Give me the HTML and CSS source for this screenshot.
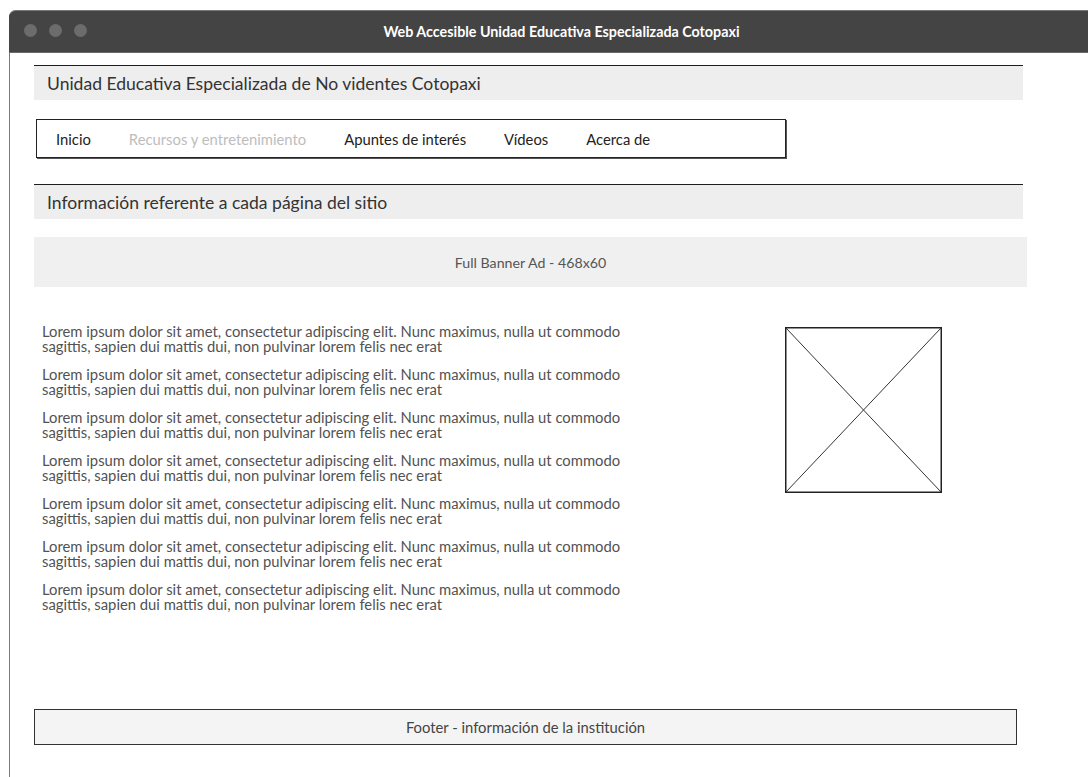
FILE: index.html
```html
<!DOCTYPE html>
<html lang="es">
<head>
<meta charset="utf-8">
<title>Web Accesible Unidad Educativa Especializada Cotopaxi</title>
<link rel="stylesheet" href="styles.css">
</head>
<body>
<div class="window">
  <div class="titlebar">
    <div class="dots"><span class="dot"></span><span class="dot"></span><span class="dot"></span></div>
    <div class="title">Web Accesible Unidad Educativa Especializada Cotopaxi</div>
  </div>
  <div class="page">
    <h1 class="band">Unidad Educativa Especializada de No videntes Cotopaxi</h1>
    <nav class="menu">
      <a class="menu-item">Inicio</a>
      <a class="menu-item disabled">Recursos y entretenimiento</a>
      <a class="menu-item">Apuntes de interés</a>
      <a class="menu-item">Vídeos</a>
      <a class="menu-item">Acerca de</a>
    </nav>
    <h2 class="band">Información referente a cada página del sitio</h2>
    <div class="banner">Full Banner Ad - 468x60</div>
    <main class="content">
      <div class="text">
        <p>Lorem ipsum dolor sit amet, consectetur adipiscing elit. Nunc maximus, nulla ut commodo<br>sagittis, sapien dui mattis dui, non pulvinar lorem felis nec erat</p>
        <p>Lorem ipsum dolor sit amet, consectetur adipiscing elit. Nunc maximus, nulla ut commodo<br>sagittis, sapien dui mattis dui, non pulvinar lorem felis nec erat</p>
        <p>Lorem ipsum dolor sit amet, consectetur adipiscing elit. Nunc maximus, nulla ut commodo<br>sagittis, sapien dui mattis dui, non pulvinar lorem felis nec erat</p>
        <p>Lorem ipsum dolor sit amet, consectetur adipiscing elit. Nunc maximus, nulla ut commodo<br>sagittis, sapien dui mattis dui, non pulvinar lorem felis nec erat</p>
        <p>Lorem ipsum dolor sit amet, consectetur adipiscing elit. Nunc maximus, nulla ut commodo<br>sagittis, sapien dui mattis dui, non pulvinar lorem felis nec erat</p>
        <p>Lorem ipsum dolor sit amet, consectetur adipiscing elit. Nunc maximus, nulla ut commodo<br>sagittis, sapien dui mattis dui, non pulvinar lorem felis nec erat</p>
        <p>Lorem ipsum dolor sit amet, consectetur adipiscing elit. Nunc maximus, nulla ut commodo<br>sagittis, sapien dui mattis dui, non pulvinar lorem felis nec erat</p>
      </div>
      <svg class="placeholder" viewBox="0 0 157 166" preserveAspectRatio="none">
        <rect x="0.75" y="0.75" width="155.5" height="164.5" fill="#fff" stroke="#222" stroke-width="1.5"/>
        <line x1="1" y1="1" x2="156" y2="165" stroke="#333" stroke-width="1"/>
        <line x1="156" y1="1" x2="1" y2="165" stroke="#333" stroke-width="1"/>
      </svg>
    </main>
    <footer class="footer">Footer - información de la institución</footer>
  </div>
</div>
</body>
</html>
```
FILE: styles.css
```css
html, body {
  margin: 0;
  background: #fff;
  overflow: hidden;
}

body {
  padding: 10px 0 0 9px;
  font-family: Lato, "Noto Sans", sans-serif;
  color: #333;
}

/* Browser window frame */
.window {
  width: 1100px;
  height: 780px;
  border-left: 1px solid #7a7a7a;
  border-top-left-radius: 7px;
  background: #fff;
}

.titlebar {
  position: relative;
  height: 41px;
  background: #444;
  border-top: 1px solid #777;
  border-bottom: 1px solid #6a6a6a;
  border-top-left-radius: 7px;
  display: flex;
  align-items: center;
  justify-content: center;
  margin-left: -1px;
}

.dots {
  position: absolute;
  left: 15px;
  top: 13px;
  display: flex;
  gap: 12px;
}

.dot {
  width: 13px;
  height: 13px;
  border-radius: 50%;
  background: #6c6c6c;
}

.title {
  color: #fff;
  font-size: 14.3px;
  font-weight: bold;
  margin-left: 4px;
}

/* Page content */
.page {
  padding: 12px 0 0 24px;
}

.band {
  width: 989px;
  height: 35px;
  margin: 0;
  box-sizing: border-box;
  border-top: 1.5px solid #1e1e1e;
  background: #eeeeee;
  padding-left: 13px;
  display: flex;
  align-items: center;
  font-size: 17.55px;
  font-weight: normal;
  color: #333;
}

.menu {
  margin: 19px 0 0 2px;
  width: 750px;
  height: 39px;
  box-sizing: border-box;
  border: 1px solid #222;
  box-shadow: 1px 1px 0 #555;
  display: flex;
  align-items: center;
  gap: 38px;
  padding: 1px 0 0 19px;
}

.menu-item {
  font-size: 14.8px;
  color: #222;
}

.menu-item.disabled {
  color: #bdbdbd;
}

h2.band {
  margin-top: 26px;
}

.banner {
  margin-top: 18px;
  width: 993px;
  height: 50px;
  background: #f0f0f0;
  display: flex;
  align-items: center;
  justify-content: center;
  font-size: 14.2px;
  color: #555;
}

.content {
  display: flex;
  align-items: flex-start;
  padding: 37px 0 0 8px;
  height: 387px;
  box-sizing: border-box;
}

.text {
  width: 743px;
}

.text p {
  margin: 0 0 13px;
  font-size: 14.8px;
  line-height: 15px;
  color: #525252;
  white-space: nowrap;
}

.placeholder {
  width: 157px;
  height: 166px;
  margin-top: 3px;
  display: block;
}

.footer {
  margin-top: 35px;
  width: 983px;
  height: 36px;
  box-sizing: border-box;
  border: 1px solid #333;
  background: #f4f4f4;
  display: flex;
  align-items: center;
  justify-content: center;
  font-size: 14.8px;
  color: #444;
}
```
